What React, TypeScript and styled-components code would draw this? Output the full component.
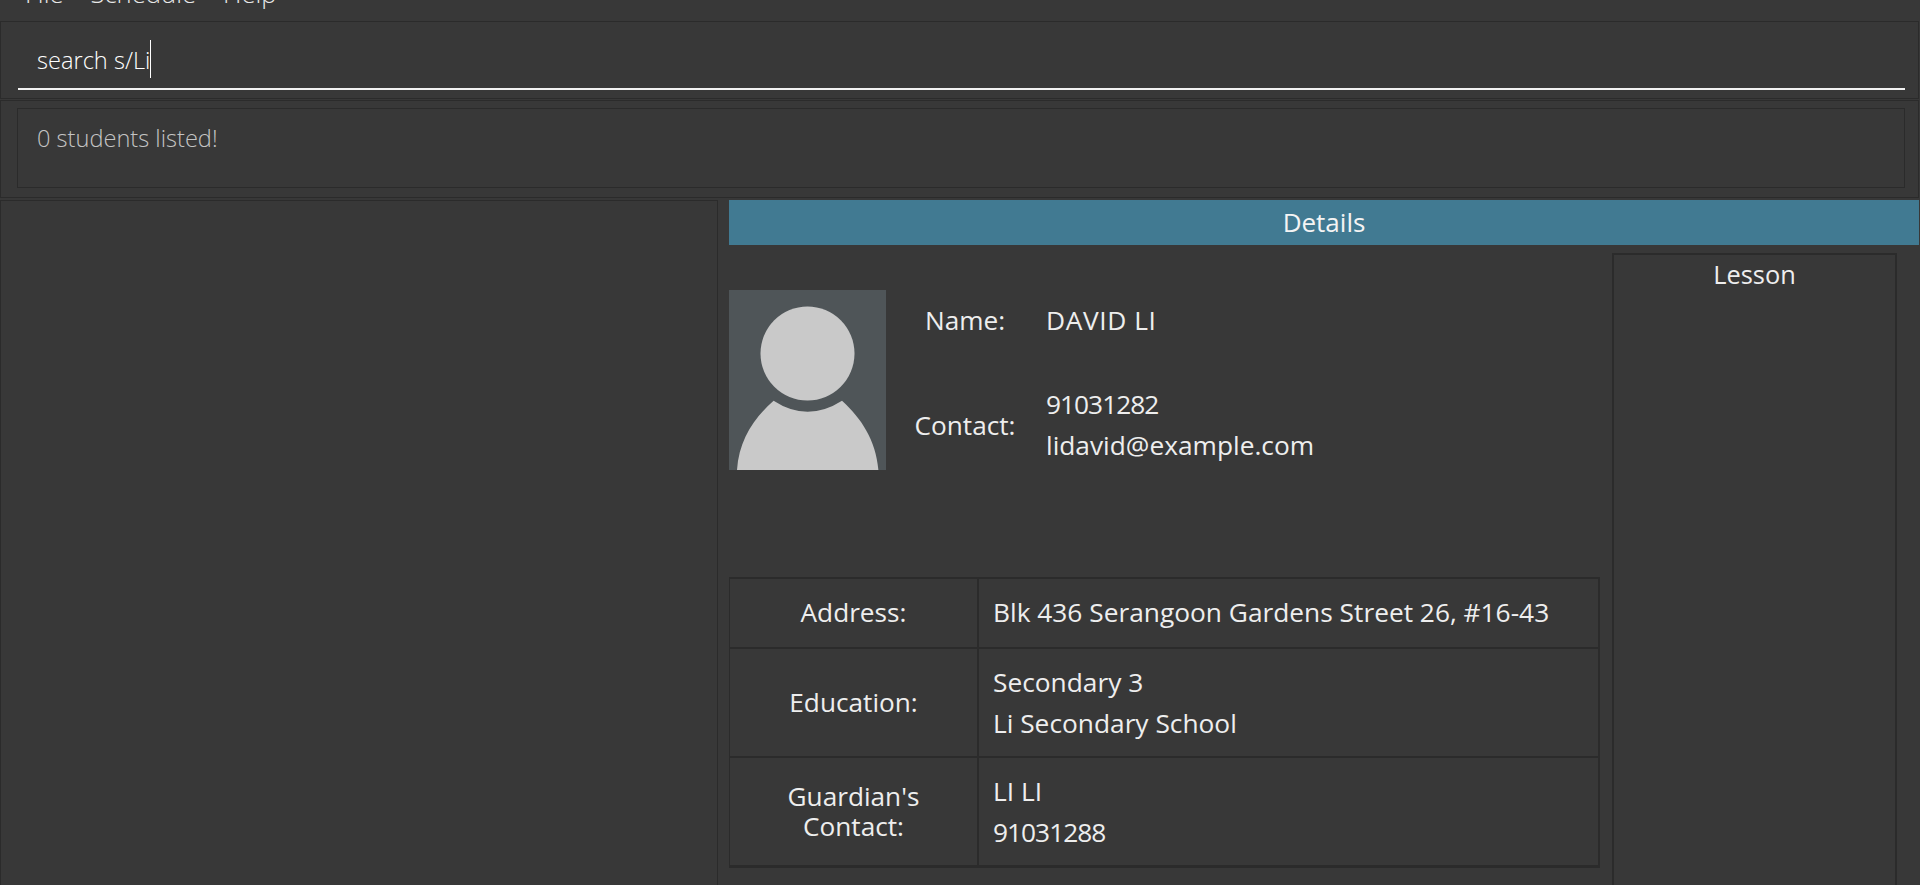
import React from "react";
import styled, { createGlobalStyle } from "styled-components";

const FONT = `"Open Sans", "Noto Sans", "Liberation Sans", sans-serif`;
const LINE = "#2b2b2b";

const GlobalStyle = createGlobalStyle`
  html, body {
    margin: 0;
    height: 100%;
    overflow: hidden;
    background: #383838;
  }
  * {
    box-sizing: border-box;
  }
`;

const Page = styled.div`
  width: 1920px;
  height: 885px;
  display: flex;
  flex-direction: column;
  overflow: hidden;
  background: #383838;
  font-family: ${FONT};
  color: #eeeeee;
`;

const MenuBar = styled.div`
  height: 21px;
  flex: none;
  display: flex;
  align-items: flex-start;
  gap: 27px;
  padding-left: 25px;
  overflow: hidden;
`;

const MenuItem = styled.span`
  font-size: 25.6px;
  font-weight: 300;
  line-height: 30px;
  margin-top: -21px;
  color: #e8e8e8;
`;

const CommandBox = styled.div`
  height: 78px;
  flex: none;
  margin-right: 1px;
  border: 1px solid ${LINE};
  padding: 0 13px 8px 17px;
  display: flex;
  align-items: flex-end;
`;

const CommandInput = styled.div`
  flex: 1;
  height: 60px;
  border-bottom: 2px solid #f2f2f2;
  padding: 2px 0 0 19px;
  display: flex;
  align-items: center;
  font-size: 23.6px;
  font-weight: 300;
  color: #ffffff;
`;

const Caret = styled.span`
  width: 1px;
  height: 38px;
  margin-top: -2px;
  background: #ffffff;
`;

const ResultOuter = styled.div`
  height: 98px;
  margin: 1px 1px 0 0;
  flex: none;
  border: 1px solid ${LINE};
  padding: 7px 13px 9px 16px;
`;

const ResultInner = styled.div`
  height: 80px;
  border: 1px solid ${LINE};
  padding: 12px 0 0 19px;
  font-size: 23.6px;
  font-weight: 300;
  line-height: 34px;
  color: #c4c4c4;
`;

const Body = styled.div`
  flex: 1;
  min-height: 0;
  margin-top: 2px;
  display: flex;
`;

const ListPanel = styled.div`
  width: 718px;
  flex: none;
  border: 1px solid ${LINE};
  border-bottom: 0;
`;

const DetailPanel = styled.div`
  flex: 1;
  min-width: 0;
  margin: 0 1px 0 11px;
  display: flex;
  flex-direction: column;
`;

const DetailHeader = styled.div`
  height: 45px;
  flex: none;
  background: #417a92;
  text-align: center;
  font-size: 26px;
  line-height: 45px;
  color: #f4f4f4;
`;

const DetailRow = styled.div`
  flex: 1;
  min-height: 0;
  padding: 8px 21px 0 0;
  display: flex;
  gap: 12px;
`;

const DetailMain = styled.div`
  width: 871px;
  flex: none;
  padding-top: 37px;
`;

const Profile = styled.div`
  height: 180px;
  display: flex;
`;

const Photo = styled.svg`
  width: 157px;
  height: 180px;
  flex: none;
  display: block;
`;

const ProfileFields = styled.div`
  flex: 1;
  display: grid;
  grid-template-columns: 158px 1fr;
  grid-template-rows: 60px 150px;
`;

const ProfileLabel = styled.div`
  text-align: center;
  align-self: center;
  font-size: 26.2px;
  line-height: 34px;
`;

const ProfileValues = styled.div`
  align-self: center;
  margin-left: 2px;
  font-size: 26.3px;
  line-height: 41px;
`;

const NameText = styled.div`
  letter-spacing: 0.6px;
`;

const PhoneText = styled.div`
  letter-spacing: -1px;
`;

const InfoTable = styled.div`
  margin-top: 107px;
  display: grid;
  grid-template-columns: 249px 1fr;
  grid-template-rows: 70px 109px 109px;
  border: 1px solid ${LINE};
  border-width: 2px 2px 1px 1px;
`;

const InfoLabel = styled.div`
  display: flex;
  align-items: center;
  justify-content: center;
  text-align: center;
  padding-bottom: 2px;
  border-right: 2px solid ${LINE};
  border-bottom: 2px solid ${LINE};
  font-size: 26.2px;
  line-height: 30px;
`;

const InfoValue = styled.div<{ $lift?: number }>`
  display: flex;
  flex-direction: column;
  justify-content: center;
  padding: 0 0 ${(p) => p.$lift ?? 0}px 14px;
  border-bottom: 2px solid ${LINE};
  font-size: 26.3px;
  line-height: 41px;
`;

const LessonBox = styled.div`
  width: 285px;
  flex: none;
  border: 2px solid ${LINE};
  border-bottom: 0;
  padding-top: 1px;
  text-align: center;
  font-size: 25.4px;
  line-height: 36px;
`;

export default function App() {
  return (
    <Page>
      <GlobalStyle />
      <MenuBar>
        <MenuItem>File</MenuItem>
        <MenuItem>Schedule</MenuItem>
        <MenuItem>Help</MenuItem>
      </MenuBar>
      <CommandBox>
        <CommandInput>
          search s/Li
          <Caret />
        </CommandInput>
      </CommandBox>
      <ResultOuter>
        <ResultInner>0 students listed!</ResultInner>
      </ResultOuter>
      <Body>
        <ListPanel />
        <DetailPanel>
          <DetailHeader>Details</DetailHeader>
          <DetailRow>
            <DetailMain>
              <Profile>
                <Photo viewBox="0 0 157 180">
                  <rect width="157" height="180" fill="#4f5558" />
                  <circle cx="78.5" cy="63.5" r="47" fill="#c9c9c9" />
                  <path
                    d="M8 180C10 150 25 128 44.6 110.7Q78.5 132.7 113 110.7C132 128 147 150 149.4 180Z"
                    fill="#c9c9c9"
                  />
                </Photo>
                <ProfileFields>
                  <ProfileLabel>Name:</ProfileLabel>
                  <ProfileValues>
                    <NameText>DAVID LI</NameText>
                  </ProfileValues>
                  <ProfileLabel>Contact:</ProfileLabel>
                  <ProfileValues>
                    <PhoneText>91031282</PhoneText>
                    <div>lidavid@example.com</div>
                  </ProfileValues>
                </ProfileFields>
              </Profile>
              <InfoTable>
                <InfoLabel>Address:</InfoLabel>
                <InfoValue $lift={2}>Blk 436 Serangoon Gardens Street 26, #16-43</InfoValue>
                <InfoLabel>Education:</InfoLabel>
                <InfoValue>
                  <div>Secondary 3</div>
                  <div>Li Secondary School</div>
                </InfoValue>
                <InfoLabel>
                  Guardian's
                  <br />
                  Contact:
                </InfoLabel>
                <InfoValue>
                  <div>LI LI</div>
                  <PhoneText>91031288</PhoneText>
                </InfoValue>
              </InfoTable>
            </DetailMain>
            <LessonBox>Lesson</LessonBox>
          </DetailRow>
        </DetailPanel>
      </Body>
    </Page>
  );
}
